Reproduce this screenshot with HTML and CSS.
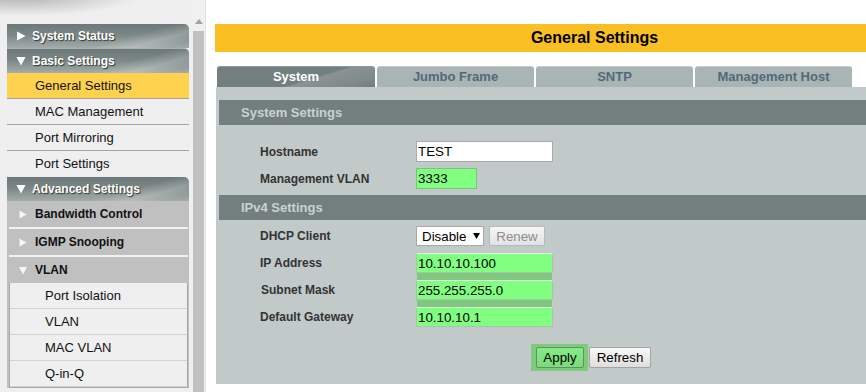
FILE: index.html
```html
<!DOCTYPE html>
<html>
<head>
<meta charset="utf-8">
<title>General Settings</title>
<link rel="stylesheet" href="styles.css">
</head>
<body>
<div class="app">
  <aside class="side">
    <nav class="menu">
      <div class="hdr"><svg class="tri" width="10" height="10" viewBox="0 0 10 10"><path d="M1 0.5L9.5 5L1 9.5Z"/></svg>System Status</div>
      <div class="hdr"><svg class="tri" width="10" height="10" viewBox="0 0 10 10"><path d="M0.5 1L9.5 1L5 9.5Z"/></svg>Basic Settings</div>
      <ul class="items">
        <li class="active">General Settings</li>
        <li>MAC Management</li>
        <li>Port Mirroring</li>
        <li>Port Settings</li>
      </ul>
      <div class="hdr"><svg class="tri" width="10" height="10" viewBox="0 0 10 10"><path d="M0.5 1L9.5 1L5 9.5Z"/></svg>Advanced Settings</div>
      <div class="groups">
        <div class="grp"><svg class="gtri" width="8" height="9" viewBox="0 0 8 9"><path d="M0.5 0.5L7.5 4.5L0.5 8.5Z"/></svg>Bandwidth Control</div>
        <div class="grp-body"></div>
        <div class="grp"><svg class="gtri" width="8" height="9" viewBox="0 0 8 9"><path d="M0.5 0.5L7.5 4.5L0.5 8.5Z"/></svg>IGMP Snooping</div>
        <div class="grp-body"></div>
        <div class="grp"><svg class="gtri" width="8" height="9" viewBox="0 0 8 9"><path d="M0 1L8 1L4 8.5Z"/></svg>VLAN</div>
        <ul class="grp-body open">
          <li>Port Isolation</li>
          <li>VLAN</li>
          <li>MAC VLAN</li>
          <li>Q-in-Q</li>
        </ul>
      </div>
    </nav>
    <div class="scroll"><span class="up"></span><span class="thumb"></span></div>
  </aside>
  <main class="main">
    <h1 class="title">General Settings</h1>
    <div class="tabs">
      <div class="tab active">System</div>
      <div class="tab">Jumbo Frame</div>
      <div class="tab">SNTP</div>
      <div class="tab">Management Host</div>
    </div>
    <section class="panel">
      <h2 class="sec">System Settings</h2>
      <div class="sys-rows">
        <div class="row"><label class="lbl">Hostname</label><input class="txt wide" type="text" value="TEST"></div>
        <div class="row"><label class="lbl">Management VLAN</label><input class="txt green short" type="text" value="3333"></div>
      </div>
      <h2 class="sec">IPv4 Settings</h2>
      <div class="row dhcp">
        <label class="lbl">DHCP Client</label>
        <span class="selwrap"><select class="sel"><option>Disable</option><option>Enable</option></select><svg class="caret" width="7" height="6" viewBox="0 0 7 6"><path d="M0 0H7L3.5 6Z"/></svg></span>
        <button class="btn renew" type="button" disabled>Renew</button>
      </div>
      <div class="ipgrid">
        <div class="lbls">
          <span>IP Address</span>
          <span class="nudge">Subnet Mask</span>
          <span>Default Gateway</span>
        </div>
        <div class="ins">
          <input class="txt green" type="text" value="10.10.10.100">
          <input class="txt green" type="text" value="255.255.255.0">
          <input class="txt green" type="text" value="10.10.10.1">
        </div>
      </div>
      <div class="actions">
        <span class="halo"><button class="btn apply" type="button">Apply</button></span>
        <button class="btn refresh" type="button">Refresh</button>
      </div>
    </section>
  </main>
</div>
</body>
</html>
```
FILE: styles.css
```css
html, body {
  margin: 0;
  padding: 0;
  background: #fff;
  font-family: "Liberation Sans", Arial, sans-serif;
}

.app {
  display: flex;
  height: 392px;
  overflow: hidden;
}

/* ---------- left frame ---------- */
.side {
  width: 206px;
  flex: none;
  display: flex;
  align-items: stretch;
  background:
    radial-gradient(ellipse 120px 20px at 20px -4px, rgba(60, 60, 60, 0.35), rgba(60, 60, 60, 0) 100%),
    #efefef;
  border-right: 1px solid #e2e2e2;
  box-sizing: border-box;
}

.menu {
  width: 182px;
  margin: 24px 0 0 7px;
  flex: none;
}

.hdr {
  height: 24px;
  box-sizing: border-box;
  display: flex;
  align-items: center;
  padding-left: 9px;
  color: #fff;
  font-size: 12px;
  font-weight: bold;
  text-shadow: 1px 1px 1px #2f3535;
  border-top-right-radius: 5px;
  background:
    linear-gradient(165deg, rgba(255, 255, 255, 0) 62%, rgba(255, 255, 255, 0.22) 78%, rgba(255, 255, 255, 0) 92%),
    linear-gradient(#6c7978 0%, #7b8786 45%, #a3abaa 100%);
}

.hdr + .hdr {
  height: 25px;
  border-top: 1px solid #a9b1b0;
}

.tri {
  fill: #fff;
  margin-right: 6px;
  flex: none;
}

.items {
  list-style: none;
  margin: 0;
  padding: 0;
  background: #efefef;
}

.items li {
  height: 26px;
  box-sizing: border-box;
  border-bottom: 1px solid #a3a3a3;
  padding-left: 28px;
  font-size: 13px;
  line-height: 25px;
  color: #111;
}

.items li:last-child {
  border-bottom: none;
}

.items li.active {
  background: #fed24f;
}

.groups {
  background: #c0c0c0;
}

.grp {
  height: 26px;
  display: flex;
  align-items: center;
  padding-left: 12px;
  font-size: 12px;
  font-weight: bold;
  color: #111;
}

.gtri {
  fill: #f6f6f6;
  margin-right: 8px;
  flex: none;
}

.grp-body {
  height: 2px;
  margin: 0 1px 0 2px;
  background: #f1f1f1;
}

.grp-body.open {
  height: auto;
  list-style: none;
  padding: 0;
  border: 1px solid #a9a9a9;
  border-top: none;
  background: #efefef;
}

.grp-body.open li {
  height: 26px;
  box-sizing: border-box;
  border-bottom: 1px solid #d2d2d2;
  padding-left: 35px;
  font-size: 13px;
  line-height: 25px;
  color: #111;
}

.scroll {
  width: 14px;
  margin-left: 3px;
  display: flex;
  flex-direction: column;
  align-items: center;
  padding-top: 19px;
  background: #f0f0f0;
}

.up {
  width: 0;
  height: 0;
  border-left: 4px solid transparent;
  border-right: 4px solid transparent;
  border-bottom: 5px solid #a3a3a3;
}

.thumb {
  flex: 1;
  align-self: stretch;
  margin: 7px 1px 0 1px;
  background: #c1c1c1;
}

/* ---------- main frame ---------- */
.main {
  flex: 1;
  min-width: 0;
  padding: 24px 0 0 9px;
}

.title {
  margin: 0;
  height: 28px;
  line-height: 28px;
  background: #f9bf23;
  color: #000;
  font-size: 16px;
  font-weight: bold;
  text-align: center;
  padding-left: 108px;
}

.tabs {
  display: flex;
  gap: 2px;
  margin: 14px 0 0 2px;
}

.tab {
  width: 157px;
  height: 21px;
  box-sizing: border-box;
  line-height: 20px;
  text-align: center;
  font-size: 13px;
  font-weight: bold;
  color: #52697a;
  background: #a9b5b4;
  border-top: 1px solid #c4cccb;
  border-radius: 3px 3px 0 0;
}

.tab.active {
  width: 158px;
  color: #fff;
  border-top-color: #8e9898;
  background:
    linear-gradient(163deg, rgba(255, 255, 255, 0) 58%, rgba(255, 255, 255, 0.16) 62%, rgba(255, 255, 255, 0.08) 85%, rgba(255, 255, 255, 0) 100%),
    #737f7e;
}

.panel {
  margin-left: 1px;
  padding: 13px 0 13px 3px;
  background: #c1c9c9;
}

.sec {
  margin: 0;
  height: 25px;
  line-height: 25px;
  padding-left: 22px;
  background: #727f7e;
  color: #c9d1d3;
  font-size: 13px;
  font-weight: bold;
}

.sys-rows {
  margin: 13px 0 3px;
}

.row {
  display: flex;
  align-items: center;
  height: 27px;
  padding-left: 41px;
}

.lbl,
.lbls span {
  width: 156px;
  flex: none;
  font-size: 12px;
  font-weight: bold;
  color: #333;
}

.txt {
  box-sizing: border-box;
  height: 21px;
  margin: 0;
  padding: 0 1px;
  border: 1px solid #a9a9a9;
  background: #fff;
  color: #000;
  font-family: "Liberation Sans", Arial, sans-serif;
  font-size: 13.33px;
  outline: none;
}

.txt.wide {
  width: 137px;
}

.txt.short {
  width: 61px;
}

.txt.green {
  background: #80ff80;
  border-color: #7cc47c;
}

.dhcp {
  height: 20px;
  margin-top: 6px;
}

.selwrap {
  position: relative;
  display: inline-flex;
}

.sel {
  -webkit-appearance: none;
  appearance: none;
  box-sizing: border-box;
  width: 68px;
  height: 20px;
  margin: 0;
  padding: 0 0 0 5px;
  border: 1px solid #a9a9a9;
  border-radius: 0;
  background: #fff;
  color: #000;
  font-family: "Liberation Sans", Arial, sans-serif;
  font-size: 13.33px;
}

.caret {
  position: absolute;
  left: 57px;
  top: 7px;
  fill: #000;
  pointer-events: none;
}

.btn {
  box-sizing: border-box;
  height: 21px;
  margin: 0;
  padding: 0;
  border: 1px solid #a3a3a3;
  border-radius: 2px;
  background: linear-gradient(#f8f8f8, #dedede);
  color: #000;
  font-family: "Liberation Sans", Arial, sans-serif;
  font-size: 13.33px;
}

.renew {
  width: 56px;
  height: 20px;
  margin-left: 5px;
  color: #8d8d8d;
  border-color: #b9b9b9;
  background: linear-gradient(#f6f6f6, #e2e2e2);
}

.ipgrid {
  display: flex;
  margin-top: 7px;
  padding-left: 41px;
}

.lbls {
  display: flex;
  flex-direction: column;
  gap: 7px;
}

.lbls span {
  height: 20px;
  line-height: 20px;
}

.lbls .nudge {
  padding-left: 1px;
  box-sizing: border-box;
}

.ins {
  display: flex;
  flex-direction: column;
  gap: 7px;
  width: 137px;
  background: linear-gradient(to right, transparent 1px, #80c880 1px, #80c880 136px, transparent 136px);
}

.ins .txt {
  width: 137px;
  height: 20px;
  border-color: #a7c4a7;
  border-top-color: #e6eee6;
}

.actions {
  display: flex;
  align-items: center;
  margin: 17px 0 0 312px;
}

.halo {
  display: flex;
  padding: 3px 4px 3px 5px;
  background: #7fca7f;
}

.apply {
  width: 48px;
  background: linear-gradient(#86ea86, #78dc78);
  border-color: #6b8b6b;
}

.refresh {
  width: 62px;
  margin-left: 1px;
}
```
